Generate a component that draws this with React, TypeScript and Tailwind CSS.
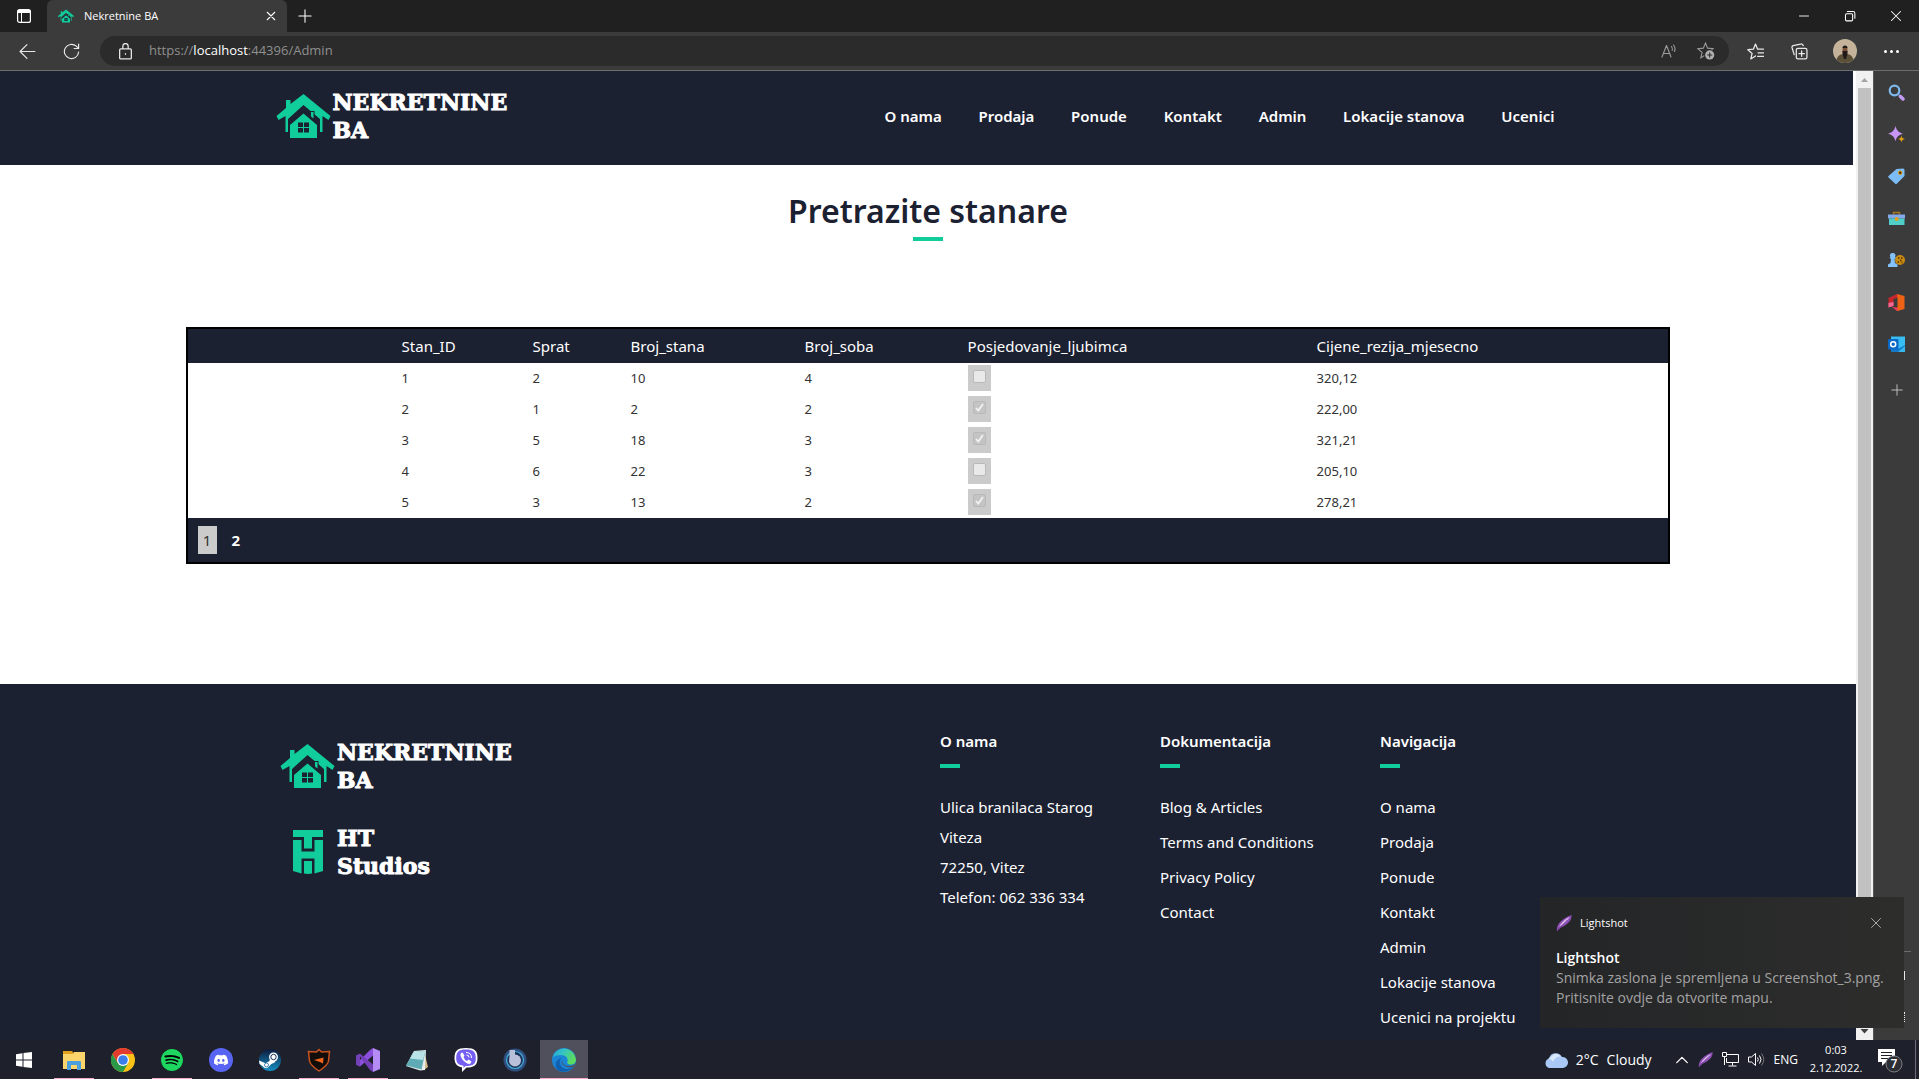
import React from "react";
import { SiDiscord, SiSpotify, SiSteam } from "react-icons/si";

const uiFont = "font-['Open_Sans','Noto_Sans',sans-serif]";
const siteFont = "font-['Noto_Sans','Open_Sans',sans-serif]";

/* ---------- brand drawings ---------- */

function House({ className }: { className?: string }) {
  return (
    <svg viewBox="0 0 54 44" className={className} aria-hidden="true">
      <path
        fill="#10cd9b"
        d="M27 0 54 22l-2 4-6-4v16h-2.500V25L27 11 11.500 25v13H9V22l-7 4-2-4 9.500-8V6H14v4z"
      />
      <path fill="#1c2132" d="M27 16.500 42 29v3h-1L27 20 13 32h-1v-3zM33.500 17h4.500v9l-4.500-3.500z" />
      <path fill="#10cd9b" d="m27 19.500 13.500 11.500v13h-27V31z" />
      <path fill="#10cd9b" d="M34.500 18h2.500v6.500l-2.500-2z" />
      <path fill="#1c2132" d="M21.500 28.500h5v4.500h-5zM27.500 28.500h5v4.500h-5zM21.500 34h5v4.500h-5zM27.500 34h5v4.500h-5z" />
    </svg>
  );
}

function StudioMark() {
  return (
    <svg viewBox="0 0 30 44" className="h-11 w-[30px]" aria-hidden="true">
      <g fill="#10cd9b">
        <path d="M0 0h30v7H19v11.500h-8V7H0z" />
        <path d="M0 10h8.500v11.500h13V10H30v31l-8.500 2.500V28.500h-13v15L0 41z" />
        <path d="M11 31h8v12.500l-4 .5-4-.5z" />
      </g>
    </svg>
  );
}

function Brand({ mark, lines }: { mark: React.ReactNode; lines: [string, string] }) {
  return (
    <a href="#" className="flex items-center gap-0.5">
      <span className="flex w-[55px] justify-center">{mark}</span>
      <span className="font-['DejaVu_Serif',serif] text-[22px] leading-7 font-bold text-white [-webkit-text-stroke:1px_white]">
        {lines[0]}
        <br />
        {lines[1]}
      </span>
    </a>
  );
}

function Feather({ className }: { className?: string }) {
  return (
    <svg viewBox="0 0 16 16" className={className} aria-hidden="true">
      <path fill="#8d4fb5" d="M1 16C0 10 5 4 15.500 0c.5 5-3 9-10.500 12.500z" />
      <path fill="#dcbcec" d="M3 12C5 8 9 4 13.500 2 12 6 8 9 3 12z" />
      <path stroke="#6f3a98" strokeWidth="1" fill="none" d="M1 15.500 12 4.500" />
    </svg>
  );
}

/* ---------- browser chrome ---------- */

function Line({ d, className = "size-4", w = 1.2 }: { d: string; className?: string; w?: number }) {
  return (
    <svg
      viewBox="0 0 16 16"
      className={className}
      fill="none"
      stroke="currentColor"
      strokeWidth={w}
      strokeLinecap="round"
      strokeLinejoin="round"
      aria-hidden="true"
    >
      <path d={d} />
    </svg>
  );
}

const STAR = "M8 1 10 5.800l5.200.5-4 3.500 1.200 5.200L8 12.200 3.600 15l1.200-5.200-4-3.500L6 5.800z";

function TabStrip() {
  return (
    <div className="flex h-8 shrink-0 bg-[#202020] text-white">
      <button aria-label="Tab actions" className="flex w-[47px] items-center justify-center">
        <svg viewBox="0 0 14 14" className="size-3.5" fill="none" stroke="#fff" aria-hidden="true">
          <rect x=".6" y=".6" width="12.800" height="12.800" rx="2" strokeWidth="1.200" />
          <path d="M1 1.500h12v2H1z" fill="#fff" />
          <path d="M4.500 4v9" />
        </svg>
      </button>
      <div className="flex w-60 items-center rounded-t-md bg-[#3b3b3b] pr-1.5 pl-[11px]">
        <House className="h-4 w-4" />
        <span className="ml-2.5 flex-1 text-[11px]">Nekretnine BA</span>
        <button aria-label="Close tab" className="p-1">
          <Line d="M3 3l10 10M13 3 3 13" className="size-3" w={1.500} />
        </button>
      </div>
      <button aria-label="New tab" className="flex w-9 items-center justify-center">
        <Line d="M8 1v14M1 8h14" className="size-3.5" />
      </button>
      <div className="flex-1" />
      <button aria-label="Minimize" className="flex w-[46px] items-center justify-center">
        <Line d="M2 8h12" className="size-3" />
      </button>
      <button aria-label="Restore" className="flex w-[46px] items-center justify-center">
        <Line
          d="M3.500 5h6.500a1.500 1.500 0 0 1 1.500 1.500V13a1.500 1.500 0 0 1-1.500 1.500H3.500A1.500 1.500 0 0 1 2 13V6.500A1.500 1.500 0 0 1 3.500 5M4.500 2H12a2.500 2.500 0 0 1 2.500 2.500V11"
          className="size-3"
          w={1.400}
        />
      </button>
      <button aria-label="Close" className="flex w-[46px] items-center justify-center">
        <Line d="M2 2l12 12M14 2 2 14" className="size-3" w={1.400} />
      </button>
    </div>
  );
}

function Toolbar() {
  return (
    <div className="flex h-[38px] shrink-0 items-center bg-[#3b3b3b] text-[#e8e8e8]">
      <button aria-label="Back" className="mr-[27px] ml-[19px]">
        <Line d="M15 8H1M7.500 1.500 1 8l6.500 6.500" className="size-[17px]" w={1.100} />
      </button>
      <button aria-label="Refresh" className="mr-[20px]">
        <Line d="M14.700 8.500A6.700 6.700 0 1 1 12.500 3l2 2M14.700 1v4.200h-4.200" className="size-[17px]" w={1.100} />
      </button>
      <div className="flex h-[30px] flex-1 items-center rounded-full bg-[#2b2b2b] pl-[17px]">
        <Line
          d="M3.500 5.500h9a1 1 0 0 1 1 1V14a1 1 0 0 1-1 1h-9a1 1 0 0 1-1-1V6.500a1 1 0 0 1 1-1M5.500 5.500V3a2.500 2.500 0 0 1 5 0v2.500M8 10v.6"
          className="size-[17px]"
        />
        <div className="ml-[15px] flex-1 text-[13px] text-[#8f8f8f]">
          https://<span className="text-white">localhost</span>:44396/Admin
        </div>
        <button aria-label="Read aloud" className="mr-5 text-[#9a9a9a]">
          <Line
            d="M1 14 5.500 2.500 10 14M2.500 10.500h6M10.500 3.500a4 4 0 0 1 .7 4M12.500 2a6.500 6.500 0 0 1 1 6.500"
            className="size-4"
            w={1.100}
          />
        </button>
        <button aria-label="Add to favorites" className="mr-[14px] text-[#9a9a9a]">
          <svg viewBox="0 0 17 17" className="size-[18px]" aria-hidden="true">
            <path d={STAR} fill="none" stroke="currentColor" />
            <circle cx="12" cy="12.200" r="5.300" fill="#2b2b2b" />
            <circle cx="12" cy="12.200" r="4.300" fill="#b0b0b0" />
            <path d="M12 9.800v4.800M9.600 12.200h4.800" stroke="#2b2b2b" />
          </svg>
        </button>
      </div>
      <button aria-label="Favorites" className="mr-[27px] ml-[18px]">
        <Line
          d="M8 12.200 3.600 15l1.200-5.200-4-3.500L6 5.800 8 1l2 4.800h5.500M10.500 9.300h5M10 12.500h5.500"
          className="size-[17px]"
        />
      </button>
      <button aria-label="Collections" className="mr-[25px]">
        <Line
          d="M6.500 5h7A1.500 1.500 0 0 1 15 6.500v7a1.500 1.500 0 0 1-1.500 1.500h-7A1.500 1.500 0 0 1 5 13.500v-7A1.500 1.500 0 0 1 6.500 5M10 7.500v5M7.500 10h5M3 11 1 4.500A1.700 1.700 0 0 1 2 2.500L9 1a2 2 0 0 1 2.500 1.500"
          className="size-[17px]"
        />
      </button>
      <button aria-label="Profile" className="mr-[27px]">
        <svg viewBox="0 0 24 24" className="size-6" aria-hidden="true">
          <circle cx="12" cy="12" r="12" fill="#c4b39a" />
          <path d="M3.500 20.500C5 16 8 15 12 15s7 1 8.500 5.500A12 12 0 0 1 3.500 20.500z" fill="#5c5138" />
          <ellipse cx="12" cy="11" rx="2.500" ry="4" fill="#7d5137" />
          <path d="M9.500 12h5v3l-1.500 5h-2l-1.500-5zM9.500 9a2.500 2.500 0 0 1 5 0z" fill="#221a18" />
        </svg>
      </button>
      <button aria-label="Settings and more" className="mr-5 flex gap-[3px]">
        <span className="size-[3px] rounded-full bg-white" />
        <span className="size-[3px] rounded-full bg-white" />
        <span className="size-[3px] rounded-full bg-white" />
      </button>
    </div>
  );
}

const sideIcons: { name: string; art: React.ReactNode }[] = [
  {
    name: "Search",
    art: (
      <>
        <circle cx="6.500" cy="6.500" r="4.800" fill="none" stroke="#7db9ee" strokeWidth="2.200" />
        <path d="m11 11 1 1" stroke="#7db9ee" strokeWidth="2" />
        <path d="m12.500 12.500 2.500 2.500" stroke="#c39bf0" strokeWidth="3.500" strokeLinecap="round" />
      </>
    ),
  },
  {
    name: "Discover",
    art: (
      <>
        <path d="M7.500 0c1.200 4.500 3 6.500 7.500 7.700-4.500 1.200-6.300 3-7.500 7.500C6.300 10.700 4.500 8.900 0 7.700 4.500 6.500 6.300 4.500 7.500 0z" fill="#c795f4" />
        <path d="M13.500 9.500c.5 2.200 1.200 3 3.500 3.500-2.300.5-3 1.300-3.500 3.500-.5-2.200-1.200-3-3.500-3.500 2.300-.5 3-1.300 3.500-3.500z" fill="#e0a010" />
      </>
    ),
  },
  {
    name: "Shopping",
    art: (
      <>
        <path d="M8.500 1 15 .5q1.500 0 1.500 1.500V8L9 15.500q-1 1-2 0L.8 9.800q-1.200-1 0-2z" fill="#7cbcf7" />
        <circle cx="12.200" cy="4.700" r="2.200" fill="#e5a01a" />
        <circle cx="12.200" cy="4.700" r="1.200" fill="#3d2b05" />
      </>
    ),
  },
  {
    name: "Tools",
    art: (
      <>
        <path d="M5.500 4.500V2.500h6v2" fill="none" stroke="#a87a1d" strokeWidth="1.500" />
        <path d="M0 4.500h17v4H0z" fill="#86a9ea" />
        <path d="M1 8.500h15.500V15H1z" fill="#4fcfc8" />
        <circle cx="8.700" cy="9" r="2" fill="#e0a020" />
      </>
    ),
  },
  {
    name: "Games",
    art: (
      <>
        <circle cx="12" cy="8" r="5" fill="#c98a12" />
        <path d="M10 6h1.500M13 6h1.500M12 8.500h1.500M9.500 10h1.500M13.500 10.500h1" stroke="#513400" strokeWidth="1.400" />
        <path d="M5 1a2.500 2.500 0 0 1 2 4l1 1-1.500 1 .5 4 2.500 1.500V15H0v-2.500l2.500-1.500.5-4L1.500 6l1-1A2.500 2.500 0 0 1 5 1z" fill="#84c1fa" />
      </>
    ),
  },
  {
    name: "Office",
    art: (
      <>
        <path d="M.5 4 9 0l1.500 3.500L5.500 5v7L.5 13.500z" fill="#c9252d" />
        <path d="M.5 9 5.500 8v4L.5 13.500z" fill="#f06a95" />
        <path d="M4 13 10 13.500V17L9 17z" fill="#f0365a" />
        <path d="M9 0 16.500 2v13L9.500 17V4z" fill="#ee6216" />
      </>
    ),
  },
  {
    name: "Outlook",
    art: (
      <>
        <path d="M3 .5h14V16H3z" fill="#38bdf2" />
        <path d="m3 9 7 4 7-4v7H3z" fill="#1478c8" />
        <path d="m17 10-7 6h7z" fill="#36b7ee" />
        <rect x="0" y="3" width="10.500" height="10.500" rx="1" fill="#0a69c7" />
        <circle cx="5.200" cy="8.200" r="2.500" fill="none" stroke="#fff" strokeWidth="1.500" />
      </>
    ),
  },
];

function SideBar() {
  return (
    <aside className="relative flex w-[46px] shrink-0 flex-col items-center gap-[25px] border-l border-[#555] bg-[#3b3b3b] pt-[13px]">
      {sideIcons.map((i) => (
        <button key={i.name} aria-label={i.name}>
          <svg viewBox="0 0 17 17" className="size-[17px]" aria-hidden="true">
            {i.art}
          </svg>
        </button>
      ))}
      <button aria-label="Customize" className="mt-1.5 text-[#c8c8c8]">
        <Line d="M8 1v14M1 8h14" className="size-3" />
      </button>
      <div className="absolute right-2 bottom-[88px] h-px w-7 bg-[#6b6b6b]" />
      <span className="absolute right-3.5 bottom-[60px] h-[9px] w-3 bg-[#e8e8e8]" />
      <span className="absolute right-3.5 bottom-[18px] h-2.5 w-3 border-r border-dotted border-[#e8e8e8]" />
    </aside>
  );
}

function ScrollBar() {
  return (
    <div className="flex w-[17px] shrink-0 flex-col items-center bg-[#f1f1f1]">
      <svg viewBox="0 0 17 17" className="size-[17px]" aria-hidden="true">
        <path d="m5 11 3.500-4L12 11z" fill="#a3a3a3" />
      </svg>
      <div className="w-[13px] flex-1 bg-[#c1c1c1]" />
      <svg viewBox="0 0 17 17" className="mt-[60px] size-[17px]" aria-hidden="true">
        <path d="m4.500 6 4 4.500 4-4.500z" fill="#404040" />
      </svg>
    </div>
  );
}

/* ---------- web page ---------- */

const navItems = ["O nama", "Prodaja", "Ponude", "Kontakt", "Admin", "Lokacije stanova", "Ucenici"];

function SiteHeader() {
  return (
    <header className="mr-[3px] h-[94px] shrink-0 bg-[#1c2132]">
      <div className="mx-auto flex w-[1302px] items-center justify-between pt-[17px] pr-[23px]">
        <Brand mark={<House className="h-11 w-[55px]" />} lines={["NEKRETNINE", "BA"]} />
        <nav className="flex w-[670px] justify-between text-[15px] font-semibold text-white">
          {navItems.map((n) => (
            <a key={n} href="#" className="whitespace-nowrap">
              {n}
            </a>
          ))}
        </nav>
      </div>
    </header>
  );
}

const columns = ["Stan_ID", "Sprat", "Broj_stana", "Broj_soba", "Posjedovanje_ljubimca", "Cijene_rezija_mjesecno"];

const rows = [
  { id: 1, floor: 2, flat: 10, rooms: 4, pet: false, cost: "320,12" },
  { id: 2, floor: 1, flat: 2, rooms: 2, pet: true, cost: "222,00" },
  { id: 3, floor: 5, flat: 18, rooms: 3, pet: true, cost: "321,21" },
  { id: 4, floor: 6, flat: 22, rooms: 3, pet: false, cost: "205,10" },
  { id: 5, floor: 3, flat: 13, rooms: 2, pet: true, cost: "278,21" },
];

function PetBox({ checked, id }: { checked: boolean; id: number }) {
  return (
    <label className="flex h-[26px] w-[23px] justify-center bg-[#cbcbcb] pt-[5px]">
      <input
        type="checkbox"
        disabled
        checked={checked}
        readOnly
        aria-label={`Posjedovanje ljubimca, stan ${id}`}
        className="peer size-[13px] appearance-none rounded-xs border border-[#b9b9b9] bg-[#e9e9e9] checked:bg-[#c4c4c4]"
      />
      <svg
        viewBox="0 0 13 13"
        className="invisible -ml-[13px] size-[13px] peer-checked:visible"
        fill="none"
        stroke="#f2f2f2"
        strokeWidth="1.800"
        aria-hidden="true"
      >
        <path d="m3 7 2.300 2.500 4.700-6.500" />
      </svg>
    </label>
  );
}

function Tenants() {
  return (
    <div className="mx-auto w-4/5 border-2 border-black">
      <table className="w-full table-fixed border-collapse text-left">
        <colgroup>
          <col className="w-[214px]" />
          <col className="w-[131px]" />
          <col className="w-[98px]" />
          <col className="w-[174px]" />
          <col className="w-[163px]" />
          <col className="w-[349px]" />
          <col />
        </colgroup>
        <thead className="bg-[#1c2132] text-[15px] text-white">
          <tr className="h-[34px]">
            <td />
            {columns.map((c) => (
              <th key={c} scope="col" className="p-0 font-normal">
                {c}
              </th>
            ))}
          </tr>
        </thead>
        <tbody className="text-[13px] text-[#333]">
          {rows.map((r) => (
            <tr key={r.id} className="h-[31px]">
              <td />
              <td>{r.id}</td>
              <td>{r.floor}</td>
              <td>{r.flat}</td>
              <td>{r.rooms}</td>
              <td className="pb-px">
                <PetBox checked={r.pet} id={r.id} />
              </td>
              <td>{r.cost}</td>
            </tr>
          ))}
        </tbody>
      </table>
      <div className="flex h-11 items-center gap-[15px] bg-[#1c2132] pl-2.5 text-[15px]">
        <span className="flex h-7 w-[19px] items-center justify-center bg-[#cbcbcb] text-[#333]">1</span>
        <a href="#" className="font-bold text-white">
          2
        </a>
      </div>
    </div>
  );
}

function FooterColumn({ title, width, children }: { title: string; width: string; children: React.ReactNode }) {
  return (
    <section className={width}>
      <h2 className="text-[15px] leading-6 font-semibold">{title}</h2>
      <div className="mt-[11px] mb-6 h-1 w-5 bg-[#10cd9b]" />
      {children}
    </section>
  );
}

function Links({ items }: { items: string[] }) {
  return (
    <ul>
      {items.map((l) => (
        <li key={l} className="h-[35px] leading-[30px] whitespace-nowrap">
          <a href="#">{l}</a>
        </li>
      ))}
    </ul>
  );
}

function SiteFooter() {
  return (
    <footer className="flex-1 bg-[#1c2132] text-[15px] text-white">
      <div className="mx-auto flex w-[1296px] justify-between pt-[45px]">
        <div className="mt-[9px] space-y-[30px]">
          <Brand mark={<House className="h-11 w-[55px]" />} lines={["NEKRETNINE", "BA"]} />
          <Brand mark={<StudioMark />} lines={["HT", "Studios"]} />
        </div>
        <div className="flex gap-[60px]">
          <FooterColumn title="O nama" width="w-40">
            <address className="leading-[30px] not-italic">
              Ulica branilaca Starog Viteza
              <br />
              72250, Vitez
              <br />
              Telefon: 062 336 334
            </address>
          </FooterColumn>
          <FooterColumn title="Dokumentacija" width="w-40">
            <Links items={["Blog & Articles", "Terms and Conditions", "Privacy Policy", "Contact"]} />
          </FooterColumn>
          <FooterColumn title="Navigacija" width="w-[196px]">
            <Links items={["O nama", "Prodaja", "Ponude", "Kontakt", "Admin", "Lokacije stanova", "Ucenici na projektu"]} />
          </FooterColumn>
        </div>
      </div>
    </footer>
  );
}

function Site() {
  return (
    <div className={`flex min-w-0 flex-1 flex-col overflow-hidden bg-white ${siteFont}`}>
      <SiteHeader />
      <main className="shrink-0 pb-[120px]">
        <h1 className="pt-6 text-center text-[32px] leading-[44px] font-semibold text-[#1c2132]">Pretrazite stanare</h1>
        <div className="mx-auto mt-1 mb-[86px] h-1 w-[30px] bg-[#10cd9b]" />
        <Tenants />
      </main>
      <SiteFooter />
    </div>
  );
}

/* ---------- desktop ---------- */

function Toast() {
  return (
    <div
      role="status"
      className="absolute right-[15px] bottom-[51px] h-[131px] w-[364px] bg-gradient-to-r from-[#242527] to-[#2d2d2c] px-4 pt-[15px] text-white"
    >
      <div className="flex h-[22px] items-center">
        <Feather className="size-4" />
        <span className="ml-2 flex-1 text-[11px]">Lightshot</span>
        <button aria-label="Dismiss" className="mr-1.5 text-[#b5b5b5]">
          <Line d="M2 2l12 12M14 2 2 14" className="size-3" />
        </button>
      </div>
      <p className="mt-3.5 text-[14px] leading-5 font-semibold">Lightshot</p>
      <p className="text-[14px] leading-5 whitespace-nowrap text-[#a3a3a3]">
        Snimka zaslona je spremljena u Screenshot_3.png.
        <br />
        Pritisnite ovdje da otvorite mapu.
      </p>
    </div>
  );
}

const apps: { name: string; open?: boolean; active?: boolean; art: React.ReactNode }[] = [
  {
    name: "File Explorer",
    open: true,
    art: (
      <svg viewBox="0 0 24 24" className="size-6">
        <path fill="#e3a21a" d="M1 3h9l1.500 2v3H1z" />
        <path fill="#fbd56b" d="M1 6h10l1-2h11v17H1z" />
        <path fill="#4a9fdc" d="M5 14q0-1 1-1h12q1 0 1 1v8h-4v-5H9v5H5z" />
      </svg>
    ),
  },
  {
    name: "Chrome",
    art: (
      <svg viewBox="0 0 24 24" className="size-6">
        <circle cx="12" cy="12" r="12" fill="#fbc116" />
        <path fill="#e33b2e" d="M1.600 6A12 12 0 0 1 22.400 6H12L6.800 15z" />
        <path fill="#2a9a48" d="M1.600 6A12 12 0 0 0 12 24l5.200-9L12 12 6.800 15z" />
        <circle cx="12" cy="12" r="6" fill="#fff" />
        <circle cx="12" cy="12" r="4.800" fill="#3b7de9" />
      </svg>
    ),
  },
  {
    name: "Spotify",
    open: true,
    art: (
      <span className="rounded-full bg-black">
        <SiSpotify className="size-[22px] text-[#1ed760]" />
      </span>
    ),
  },
  {
    name: "Discord",
    art: (
      <span className="flex size-6 items-center justify-center rounded-full bg-[#5865f2]">
        <SiDiscord className="size-3.5 text-white" />
      </span>
    ),
  },
  {
    name: "Steam",
    art: (
      <svg viewBox="0 0 24 24" className="size-6">
        <defs>
          <linearGradient id="steam" x1="0" y1="0" x2="0" y2="1">
            <stop offset="0" stopColor="#0d1a3c" />
            <stop offset="1" stopColor="#1590c4" />
          </linearGradient>
        </defs>
        <circle cx="12" cy="12" r="11" fill="url(#steam)" />
        <path fill="#fff" d="m1 12.500 6.500 2.700 4-2.200 1-4 5 5-4.500 2.200-3 3.300a3.500 3.500 0 0 1-5-1L1.500 16z" />
        <circle cx="15.500" cy="9" r="4.500" fill="#fff" />
        <circle cx="15.500" cy="9" r="2.700" fill="none" stroke="#15315c" />
        <circle cx="8.500" cy="17" r="2" fill="none" stroke="#1a6fa5" strokeWidth=".8" />
      </svg>
    ),
  },
  {
    name: "Antivirus",
    open: true,
    art: (
      <svg viewBox="0 0 24 24" className="size-6">
        <path
          fill="#120d0b"
          stroke="#c9531e"
          strokeWidth="1.500"
          d="M12 1.500 14.500 4l8-.5L21.500 13c-.5 4-5 7-9.500 10-4.500-3-9-6-9.500-10l-1-9.500 8 .5z"
        />
        <path fill="#f2661c" d="m7 12 9.500-2.500-.5 6-3-1.500z" />
      </svg>
    ),
  },
  {
    name: "Visual Studio",
    open: true,
    art: (
      <svg viewBox="0 0 24 24" className="size-6">
        <path fill="#8a4fdb" d="M17 0v7.500L4 18.500l-4-2V16L14 2z" />
        <path fill="#7440b8" d="M17 24v-7.500L4 5.500l-4 2v9l4 2V8.500L14 22z" />
        <path fill="#b58bf5" d="m17 0 7 3v18l-7 3z" />
      </svg>
    ),
  },
  {
    name: "Notepad",
    art: (
      <svg viewBox="0 0 24 24" className="size-6">
        <path fill="#d2b680" d="m19 3 4 16-4 3-2-4z" />
        <path fill="#e6eceb" d="m9 3 12-1-1 20-5 .5L1 18z" />
        <path fill="#5eabb5" d="m8.500 4 12-1-4 18.500L1 17.500z" />
        <path fill="#b9e2e6" d="m8.500 4 12-1-2.500 9L5 10.500z" />
      </svg>
    ),
  },
  {
    name: "Viber",
    art: (
      <svg viewBox="0 0 24 24" className="size-6">
        <path fill="#fff" d="M12 0c9 0 11.500 3 11.500 10s-3 9.500-11 9.500L8 24v-4.700C3 18.500.5 16 .5 10 .5 3 3 0 12 0z" />
        <path
          fill="#7360f2"
          d="M12 1.500c7.500 0 9.800 2.500 9.800 8.500s-2.300 8-10.300 8L9.500 20v-2.300C4.500 17 2.200 15 2.200 10c0-6 2.300-8.500 9.800-8.500z"
        />
        <path fill="#fff" d="m7 5 1.500-.5 2 3-1 1.500q1 3 3.500 4l1.500-1.500 3 2-1 2q-1.500 1-4-.5-4.500-2.500-6-7.500Q6.300 6 7 5z" />
        <path fill="none" stroke="#fff" d="M12 4.500q5.500 0 5.500 5.500M12.500 7q2.500 0 2.500 2.500" />
      </svg>
    ),
  },
  {
    name: "Utility",
    art: (
      <svg viewBox="0 0 24 24" className="size-6">
        <circle cx="12" cy="12" r="11.500" fill="#2f4f80" />
        <circle cx="12" cy="12" r="8.500" fill="#1b3359" stroke="#46b2dd" strokeWidth="1.200" />
        <circle cx="12" cy="12.500" r="6" fill="#b8c0da" />
        <path fill="#b8c0da" d="M6.500 2H12v9H6.500z" />
      </svg>
    ),
  },
  {
    name: "Edge",
    open: true,
    active: true,
    art: (
      <svg viewBox="0 0 24 24" className="size-6">
        <defs>
          <linearGradient id="edgeTop" x1="0" y1="0" x2="1" y2=".4">
            <stop offset="0" stopColor="#22a3dd" />
            <stop offset=".5" stopColor="#36c5c0" />
            <stop offset="1" stopColor="#5bdc5e" />
          </linearGradient>
        </defs>
        <circle cx="12" cy="12" r="12" fill="#1c84d4" />
        <path
          fill="url(#edgeTop)"
          d="M.3 10A12 12 0 0 1 24 11.500c0 3-2 5-5 5s-4.500-1.500-3.500-3C16.500 11 14 7 9 7 5 7 1.500 8 .3 10z"
        />
        <path fill="#1160b0" d="M9.500 10C6 13 8 20 14 21q4 .5 8-3a12 12 0 0 1-14 5C2 21 2 12 9.500 10z" />
        <path fill="#50505c" d="M10.500 11.500c-1 2 0 6 5 6.500 3 .3 5-.5 7.500-2l-1.200 2.800C16 20.500 10 18 9.500 14z" />
      </svg>
    ),
  },
];

function Taskbar() {
  return (
    <div className="flex h-[39px] shrink-0 items-stretch bg-[#1e212c] text-white">
      <button aria-label="Start" className="flex w-[50px] items-center justify-center pr-0.5">
        <svg viewBox="0 0 24 24" className="size-6">
          <path
            fill="#fff"
            d="M4 6.200 10.500 5.300v6.200H4zM11.500 5.100 20 4v7.500h-8.500zM4 12.500h6.500v6.200L4 17.800zM11.500 12.500H20V20l-8.500-1.100z"
          />
        </svg>
      </button>
      <div className="flex gap-px">
        {apps.map((a) => (
          <button
            key={a.name}
            aria-label={a.name}
            className={`relative flex w-12 items-center justify-center ${a.active ? "bg-[#50505c]" : ""}`}
          >
            {a.art}
            {a.open && (
              <span className={`absolute bottom-0 h-px bg-[#f9a8cb] ${a.active ? "inset-x-0" : "inset-x-1"}`} />
            )}
          </button>
        ))}
      </div>
      <div className="flex-1" />
      <button className="mr-[23px] flex items-center gap-2 text-[14px]">
        <svg viewBox="0 0 24 16" className="h-4 w-6" aria-hidden="true">
          <path fill="#a9c8f5" d="M5 16a5 5 0 0 1 0-9.500A7 7 0 0 1 18 5a5.500 5.500 0 0 1 1 11z" />
          <path fill="#d8e7fc" d="M7 5a6 6 0 0 1 10-.5A8 8 0 0 0 9 10a5 5 0 0 0-5-3z" />
        </svg>
        <span className="flex gap-2">
          <span>2°C</span>
          <span>Cloudy</span>
        </span>
      </button>
      <div className="flex items-center gap-[9px]">
        <button aria-label="Show hidden icons">
          <Line d="M2 11l6-6 6 6" className="size-3.5" w={1.500} />
        </button>
        <Feather className="size-[15px]" />
        <svg viewBox="0 0 17 15" className="h-[15px] w-[17px]" fill="none" stroke="#fff" aria-label="Network">
          <path d="M5 2.500h11.500v8H4.500V6M10.500 10.500v3M6.500 14h8M.5.5h4v4h-4zM2.500 4.500V13" />
        </svg>
        <svg viewBox="0 0 17 15" className="h-[15px] w-[17px]" fill="none" stroke="#fff" aria-label="Volume">
          <path d="M.5 5h3l4-3.500v12L3.500 10h-3zM9.500 5.500q1.500 2 0 4M11.500 3.500q3 4 0 8" />
          <path stroke="#777" d="M13.500 1.500q4.500 6 0 12" />
        </svg>
        <span className="text-[12px]">ENG</span>
      </div>
      <div className="ml-3 flex w-[52px] flex-col items-center justify-center pb-0.5 text-[11px] leading-[18px]">
        <span>0:03</span>
        <span>2.12.2022.</span>
      </div>
      <button aria-label="Notifications" className="mr-[11px] ml-4">
        <svg viewBox="0 0 26 26" className="size-[26px]" aria-hidden="true">
          <path fill="#fff" d="M0 2h17v13H8l-4 4v-4H0z" />
          <path stroke="#1e212c" d="M3 5.500h11M3 8.500h11M3 11.500h7" />
          <circle cx="16" cy="17" r="8" fill="#2c2e36" stroke="#7c7c80" />
          <text x="16" y="21" fontSize="12" fontWeight="600" textAnchor="middle" fill="#fff">
            7
          </text>
        </svg>
      </button>
      <div className="mr-[3px] w-px bg-[#6c6e75]" />
    </div>
  );
}

export default function App() {
  return (
    <div className={`relative flex h-screen flex-col overflow-hidden ${uiFont}`}>
      <TabStrip />
      <Toolbar />
      <div className="flex min-h-0 flex-1 border-t border-[#6b6f6b] bg-[#3b3b3b]">
        <Site />
        <ScrollBar />
        <SideBar />
      </div>
      <Taskbar />
      <Toast />
    </div>
  );
}
